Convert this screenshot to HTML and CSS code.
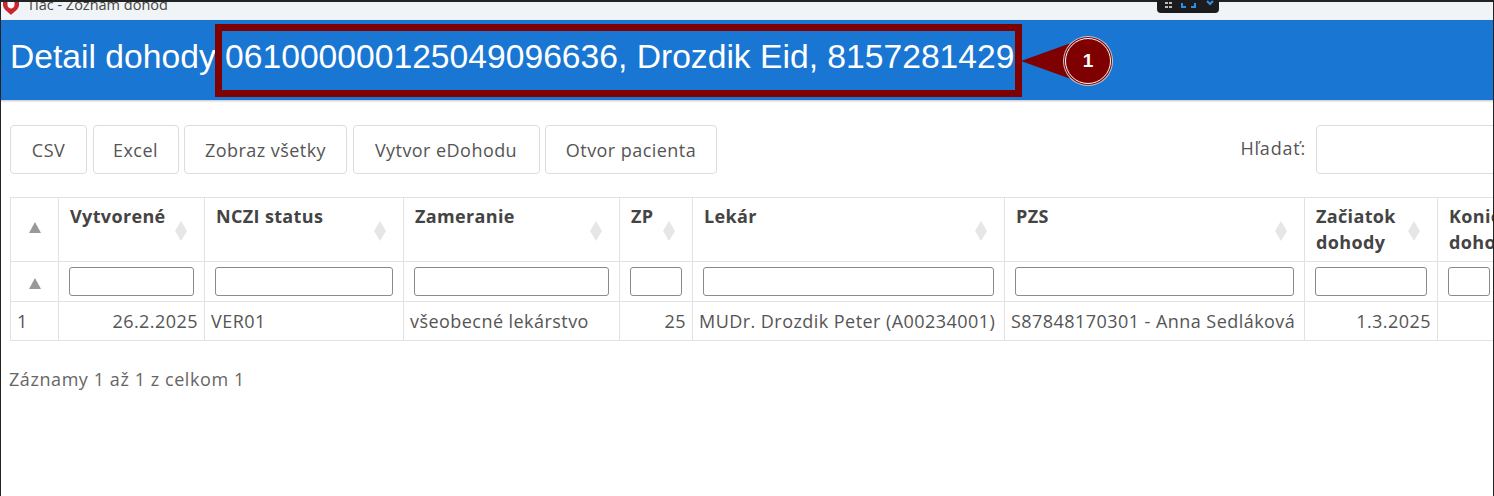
FILE: index.html
```html
<!DOCTYPE html>
<html lang="sk">
<head>
  <meta charset="UTF-8" />
  <meta name="viewport" content="width=device-width, initial-scale=1.0"/>
  <title>Detail dohody</title>
  <link rel="stylesheet" href="styles.css">
</head>
<body>

  <div class="screen">
    <div class="titlebar">
      <svg class="pin" width="16" height="14" viewBox="0 0 16 14">
        <path d="M0 0 H16 V3 C16 7 11 10 8 13 C5 10 0 7 0 3 Z" fill="#c8262e"/>
        <path d="M4.5 0 H11.5 V3 C11.5 5 9.5 6.5 8 6.5 C6.5 6.5 4.5 5 4.5 3 Z" fill="#fff"/>
      </svg>
      <span class="titlebar-text">Tlac - Zoznam dohod</span>
    </div>

    <div class="header">
      <h1>Detail dohody 061000000125049096636, Drozdik Eid, 8157281429</h1>
    </div>

    <div class="toolbar">
      <div class="buttons">
        <button class="btn btn-csv">CSV</button>
        <button class="btn btn-excel">Excel</button>
        <button class="btn btn-all">Zobraz všetky</button>
        <button class="btn btn-new">Vytvor eDohodu</button>
        <button class="btn btn-patient">Otvor pacienta</button>
      </div>
      <label class="search">Hľadať: <input type="text"></label>
    </div>

    <div class="table-wrap">
      <table class="grid">
        <colgroup>
          <col class="c-idx"><col class="c-created"><col class="c-status"><col class="c-focus"><col class="c-zp">
          <col class="c-doc"><col class="c-pzs"><col class="c-start"><col class="c-end">
        </colgroup>
        <thead>
          <tr class="head-row">
            <th class="idx"><span class="sort-up"></span></th>
            <th>Vytvorené<span class="sort-both"></span></th>
            <th>NCZI status<span class="sort-both"></span></th>
            <th>Zameranie<span class="sort-both"></span></th>
            <th>ZP<span class="sort-both"></span></th>
            <th>Lekár<span class="sort-both"></span></th>
            <th>PZS<span class="sort-both"></span></th>
            <th>Začiatok dohody<span class="sort-both"></span></th>
            <th>Koniec dohody</th>
          </tr>
          <tr class="filter-row">
            <th class="idx"><span class="sort-up"></span></th>
            <th><input type="text"></th>
            <th><input type="text"></th>
            <th><input type="text"></th>
            <th><input type="text"></th>
            <th><input type="text"></th>
            <th><input type="text"></th>
            <th><input type="text"></th>
            <th><input type="text"></th>
          </tr>
        </thead>
        <tbody>
          <tr>
            <td>1</td>
            <td class="num">26.2.2025</td>
            <td>VER01</td>
            <td>všeobecné lekárstvo</td>
            <td class="num">25</td>
            <td>MUDr. Drozdik Peter (A00234001)</td>
            <td>S87848170301 - Anna Sedláková</td>
            <td class="num">1.3.2025</td>
            <td></td>
          </tr>
        </tbody>
      </table>
    </div>

    <p class="summary">Záznamy 1 až 1 z celkom 1</p>

    <!-- anotacia nad hlavickou -->
    <div class="callout-box"></div>
    <svg class="callout-arrow" width="50" height="36" viewBox="0 0 50 36">
      <path d="M0 18 L50 0 V36 Z" fill="#7f0000"/>
    </svg>
    <div class="callout-num">1</div>

    <div class="float-bar">
      <svg width="62" height="13" viewBox="0 0 62 13">
        <g fill="#bbb">
          <rect x="8" y="2" width="3" height="2"/><rect x="12" y="2" width="3" height="2"/>
          <rect x="8" y="6" width="3" height="2"/><rect x="12" y="6" width="3" height="2"/>
        </g>
        <path d="M25 3 V7 H29 M38 3 V7 H34 M50 1 L53 4 L56 1" fill="none" stroke="#2f8fe6" stroke-width="2"/>
      </svg>
    </div>
  </div>

</body>
</html>
```

FILE: styles.css
```css
* {
  box-sizing: border-box;
}

html, body {
  margin: 0;
  height: 100%;
  overflow: hidden;
  background: #fff;
}

.screen {
  position: relative;
  width: 1494px;
  height: 496px;
  overflow: hidden;
  padding-top: 2px;
  background: #fff;
  font-family: "Open Sans", sans-serif;
  font-size: 18px;
  letter-spacing: 0.45px;
  color: #555;
}

/* schwarzer rand vom fenster */
.screen::before {
  content: "";
  position: absolute;
  inset: 0;
  border: solid #222;
  border-width: 2px 1px 0 1px;
  pointer-events: none;
  z-index: 5;
}

.titlebar {
  height: 18px;
  background: #f0f4f6;
  display: flex;
  align-items: flex-start;
  overflow: hidden;
  padding-left: 3px;
}

.pin {
  flex: none;
}

.titlebar-text {
  margin-left: 8px;
  margin-top: -6px;
  font-size: 14.5px;
  letter-spacing: 0;
  line-height: 18px;
  color: #444;
}

.header {
  height: 80px;
  background: #1976d2;
  display: flex;
  align-items: center;
  padding: 0 0 6px 10px;
  box-shadow: 0 1px 2px rgba(0, 0, 0, 0.25);
}

h1 {
  margin: 0;
  font-family: "Liberation Sans", Arial, sans-serif;
  font-size: 33.65px;
  font-weight: 400;
  letter-spacing: 0;
  color: #fff;
  white-space: nowrap;
}

.toolbar {
  display: flex;
  justify-content: space-between;
  padding: 25px 0 0 10px;
  height: 97px;
}

.buttons {
  display: flex;
  gap: 5.5px;
}

.btn {
  height: 49px;
  padding: 0;
  font-family: inherit;
  font-size: inherit;
  letter-spacing: inherit;
  color: #555;
  background: #fff;
  border: 1px solid #ddd;
  border-radius: 4px;
}

.btn-csv { width: 77px; }
.btn-excel { width: 86px; }
.btn-all { width: 163px; }
.btn-new { width: 187px; }
.btn-patient { width: 172px; }

.search {
  display: flex;
  align-items: center;
  gap: 10px;
  height: 49px;
  margin-right: -130px;
  padding-bottom: 4px;
  letter-spacing: 0.8px;
}

.search input {
  width: 308px;
  height: 49px;
  margin-bottom: -4px;
  border: 1px solid #ddd;
  border-radius: 4px;
}

.table-wrap {
  margin-left: 10px;
  width: 1483px;
  overflow: hidden;
}

.grid {
  table-layout: fixed;
  width: 1490px;
  border-collapse: collapse;
}

.c-idx { width: 48px; }
.c-created { width: 146px; }
.c-status { width: 199px; }
.c-focus { width: 216px; }
.c-zp { width: 73px; }
.c-doc { width: 312px; }
.c-pzs { width: 300px; }
.c-start { width: 133px; }
.c-end { width: 63px; }

.grid th, .grid td {
  border: 1px solid #e2e2e2;
  overflow: hidden;
  white-space: nowrap;
}

.head-row th {
  position: relative;
  height: 64px;
  padding: 5px 10px 5px 11px;
  vertical-align: top;
  text-align: left;
  font-size: 18px;
  letter-spacing: 0.35px;
  line-height: 26px;
  font-weight: 700;
  color: #444;
  white-space: normal;
}

.filter-row th {
  height: 40px;
  padding: 0 10px;
}

.filter-row input {
  display: block;
  width: 100%;
  height: 29px;
  border: 1px solid #8a8a8a;
  border-radius: 3px;
  background: #fff;
}

.grid td {
  height: 39px;
  padding: 0 6px;
  color: #555;
}

.grid td.num {
  text-align: right;
}

.grid th.idx {
  text-align: center;
  vertical-align: middle;
  padding: 0;
}

.head-row th.idx {
  padding-bottom: 8px;
}

.sort-up {
  display: inline-block;
  border-left: 6.5px solid transparent;
  border-right: 6.5px solid transparent;
  border-bottom: 11px solid #999;
}

.sort-both {
  position: absolute;
  right: 17px;
  top: 23px;
  width: 12px;
  height: 20px;
  background: #e6e6e6;
  clip-path: polygon(50% 0, 100% 50%, 50% 100%, 0 50%);
}

.summary {
  margin: 26px 0 0 9px;
  letter-spacing: 0.57px;
  color: #666;
}

.callout-box {
  position: absolute;
  left: 215px;
  top: 24px;
  width: 807px;
  height: 73px;
  border: 7px solid #7f0000;
}

.callout-arrow {
  position: absolute;
  left: 1021px;
  top: 43px;
}

.callout-num {
  position: absolute;
  left: 1064px;
  top: 37px;
  width: 48px;
  height: 48px;
  display: flex;
  align-items: center;
  justify-content: center;
  border-radius: 50%;
  background: #7f0000;
  border: 2px solid #7f0000;
  outline: 1px solid #fff;
  outline-offset: -2px;
  box-shadow: 0 0 0 1px #ccc;
  font-family: "Liberation Sans", Arial, sans-serif;
  font-size: 19px;
  font-weight: 700;
  letter-spacing: 0;
  color: #fff;
}

.float-bar {
  position: absolute;
  left: 1157px;
  top: 0;
  width: 62px;
  height: 13px;
  background: #1c1c1e;
  border-radius: 0 0 4px 4px;
  z-index: 6;
}

.float-bar svg {
  display: block;
}
```
